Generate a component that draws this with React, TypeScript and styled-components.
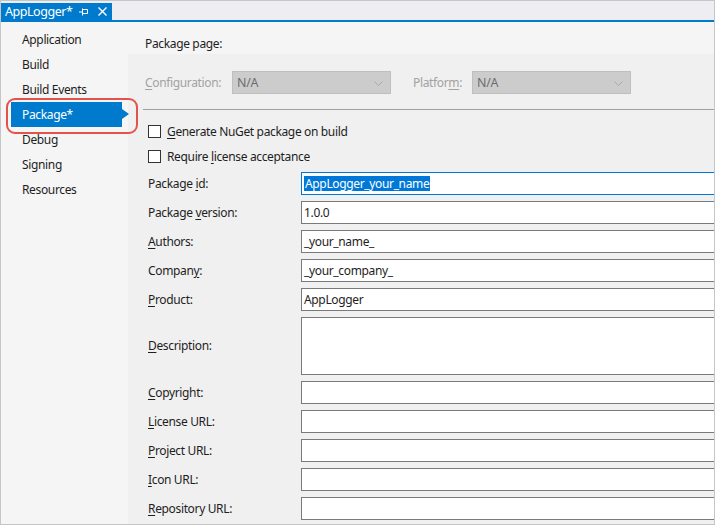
import React from 'react';
import styled, { createGlobalStyle } from 'styled-components';

const GlobalStyle = createGlobalStyle`
  html, body { margin: 0; padding: 0; background: #ffffff; }
  body { font-family: "Segoe UI", "Noto Sans", "DejaVu Sans", sans-serif; font-size: 12px; letter-spacing: -0.35px; }
  u { text-decoration: underline; text-underline-offset: 2px; text-decoration-thickness: 1px; }
`;

const Frame = styled.div`
  position: relative;
  width: 715px;
  height: 525px;
  box-sizing: border-box;
  border: 1px solid #c6c6c6;
  display: flex;
  flex-direction: column;
  overflow: hidden;
  background: #f5f5f5;
  color: #1e1e1e;
`;

const TabStrip = styled.div`
  height: 19px;
  flex: none;
  background: #eeeef2;
  display: flex;
  align-items: flex-end;
  border-bottom: 2px solid #007acc;
`;

const Tab = styled.div`
  height: 17px;
  width: 111px;
  box-sizing: border-box;
  background: #007acc;
  color: #ffffff;
  display: flex;
  align-items: center;
  padding-left: 4px;
  font-size: 12.5px;
  letter-spacing: -0.45px;
  line-height: 16px;
`;

const TabTitle = styled.span`
  width: 74px;
`;

const TabIcon = styled.svg`
  display: block;
  flex: none;
`;

const Body = styled.div`
  flex: 1;
  display: flex;
  min-height: 0;
`;

const Nav = styled.nav`
  width: 127px;
  flex: none;
  padding-top: 5px;
  display: flex;
  flex-direction: column;
  background: #f5f5f5;
`;

const NavItem = styled.div<{ $active?: boolean }>`
  position: relative;
  height: 25px;
  margin-left: 10px;
  width: 111px;
  box-sizing: border-box;
  padding-left: 11px;
  display: flex;
  align-items: center;
  background: ${p => (p.$active ? '#007acc' : 'transparent')};
  color: ${p => (p.$active ? '#ffffff' : '#1e1e1e')};
  &::after {
    content: '';
    display: ${p => (p.$active ? 'block' : 'none')};
    position: absolute;
    right: -7px;
    top: 7px;
    border-left: 7px solid #007acc;
    border-top: 5.5px solid transparent;
    border-bottom: 5.5px solid transparent;
  }
`;

const Main = styled.div`
  flex: 1;
  min-width: 0;
  display: flex;
  flex-direction: column;
  overflow: hidden;
`;

const PageHeader = styled.div`
  height: 32px;
  flex: none;
  box-sizing: border-box;
  padding: 14px 0 0 17px;
  line-height: 16px;
  background: #f5f5f5;
`;

const Panel = styled.div`
  flex: 1;
  background: #f0f0f0;
  padding: 17px 0 0 15px;
  display: flex;
  flex-direction: column;
`;

const ConfigRow = styled.div`
  display: flex;
  align-items: center;
  height: 23px;
  margin-left: 2px;
`;

const DisabledLabel = styled.span<{ $w: number }>`
  width: ${p => p.$w}px;
  color: #a2a2a2;
`;

const Select = styled.div`
  position: relative;
  width: 159px;
  height: 23px;
  box-sizing: border-box;
  border: 1px solid #bfbfbf;
  background: #cccccc;
  color: #6d6d6d;
  padding-left: 4px;
  display: flex;
  align-items: center;
  margin-right: 22px;
  font-size: 12.5px;
`;

const Chevron = styled.svg`
  position: absolute;
  right: 7px;
  top: 9px;
`;

const Separator = styled.div`
  height: 1px;
  background: #a0a0a0;
  margin-top: 15px;
`;

const CheckList = styled.div`
  margin: 9px 0 0 5px;
  display: flex;
  flex-direction: column;
`;

const CheckRow = styled.label`
  height: 25px;
  display: flex;
  align-items: center;
`;

const Box = styled.span`
  width: 13px;
  height: 13px;
  box-sizing: border-box;
  border: 1px solid #333333;
  background: #ffffff;
  margin-right: 6px;
  flex: none;
`;

const Form = styled.div`
  margin: 3px 0 0 5px;
  display: grid;
  grid-template-columns: 153px 1fr;
  row-gap: 6px;
  align-items: center;
`;

const FieldLabel = styled.span`
  line-height: 16px;
`;

const TextBox = styled.div<{ $focused?: boolean; $tall?: boolean }>`
  height: ${p => (p.$tall ? 58 : 23)}px;
  width: calc(100% + 20px);
  box-sizing: border-box;
  border: 1px solid ${p => (p.$focused ? '#0078d7' : '#7a7a7a')};
  background: #ffffff;
  padding: 0 0 0 2px;
  display: flex;
  align-items: center;
  color: #1e1e1e;
`;

const Selected = styled.span`
  background: #0078d7;
  color: #ffffff;
  padding: 0 1px;
  line-height: 15px;
`;

const Annotation = styled.div`
  position: absolute;
  left: 5px;
  top: 97px;
  width: 132px;
  height: 36px;
  box-sizing: border-box;
  border: 2px solid #e4534b;
  border-radius: 9px;
  pointer-events: none;
`;

const navItems = ['Application', 'Build', 'Build Events', 'Package*', 'Debug', 'Signing', 'Resources'];

type Field = { pre: string; key: string; post: string; value?: string; focused?: boolean; tall?: boolean };

const fields: Field[] = [
  { pre: 'Package ', key: 'i', post: 'd:', value: 'AppLogger_your_name', focused: true },
  { pre: 'Package ', key: 'v', post: 'ersion:', value: '1.0.0' },
  { pre: '', key: 'A', post: 'uthors:', value: '_your_name_' },
  { pre: 'Compan', key: 'y', post: ':', value: '_your_company_' },
  { pre: '', key: 'P', post: 'roduct:', value: 'AppLogger' },
  { pre: '', key: 'D', post: 'escription:', tall: true },
  { pre: '', key: 'C', post: 'opyright:' },
  { pre: '', key: 'L', post: 'icense URL:' },
  { pre: '', key: 'P', post: 'roject URL:' },
  { pre: '', key: 'I', post: 'con URL:' },
  { pre: '', key: 'R', post: 'epository URL:' },
];

export default function App() {
  return (
    <>
      <GlobalStyle />
      <Frame>
        <TabStrip>
          <Tab>
            <TabTitle>AppLogger*</TabTitle>
            <TabIcon width="9" height="8" viewBox="0 0 9 8">
              <path d="M0 4H3M3.5 0.5V7.5M3.5 1.5H8.5V5.5H3.5" stroke="#fff" strokeWidth="1" fill="none" />
            </TabIcon>
            <TabIcon width="9" height="9" viewBox="0 0 9 9" style={{ marginLeft: 10 }}>
              <path d="M0.5 0.5L8.5 8.5M8.5 0.5L0.5 8.5" stroke="#fff" strokeWidth="1.4" fill="none" />
            </TabIcon>
          </Tab>
        </TabStrip>
        <Body>
          <Nav>
            {navItems.map(n => (
              <NavItem key={n} $active={n === 'Package*'}>
                {n}
              </NavItem>
            ))}
          </Nav>
          <Main>
            <PageHeader>Package page:</PageHeader>
            <Panel>
              <ConfigRow>
                <DisabledLabel $w={87}>
                  <u>C</u>onfiguration:
                </DisabledLabel>
                <Select>
                  N/A
                  <Chevron width="9" height="5" viewBox="0 0 9 5">
                    <path d="M0.5 0.5L4.5 4.5L8.5 0.5" stroke="#a8a8a8" fill="none" />
                  </Chevron>
                </Select>
                <DisabledLabel $w={59}>
                  Platfor<u>m</u>:
                </DisabledLabel>
                <Select>
                  N/A
                  <Chevron width="9" height="5" viewBox="0 0 9 5">
                    <path d="M0.5 0.5L4.5 4.5L8.5 0.5" stroke="#a8a8a8" fill="none" />
                  </Chevron>
                </Select>
              </ConfigRow>
              <Separator />
              <CheckList>
                <CheckRow>
                  <Box />
                  <span>
                    <u>G</u>enerate NuGet package on build
                  </span>
                </CheckRow>
                <CheckRow>
                  <Box />
                  <span>
                    Require <u>l</u>icense acceptance
                  </span>
                </CheckRow>
              </CheckList>
              <Form>
                {fields.map((f, i) => (
                  <React.Fragment key={i}>
                    <FieldLabel>
                      {f.pre}
                      <u>{f.key}</u>
                      {f.post}
                    </FieldLabel>
                    <TextBox $focused={f.focused} $tall={f.tall}>
                      {f.focused ? <Selected>{f.value}</Selected> : f.value}
                    </TextBox>
                  </React.Fragment>
                ))}
              </Form>
            </Panel>
          </Main>
        </Body>
        <Annotation />
      </Frame>
    </>
  );
}
